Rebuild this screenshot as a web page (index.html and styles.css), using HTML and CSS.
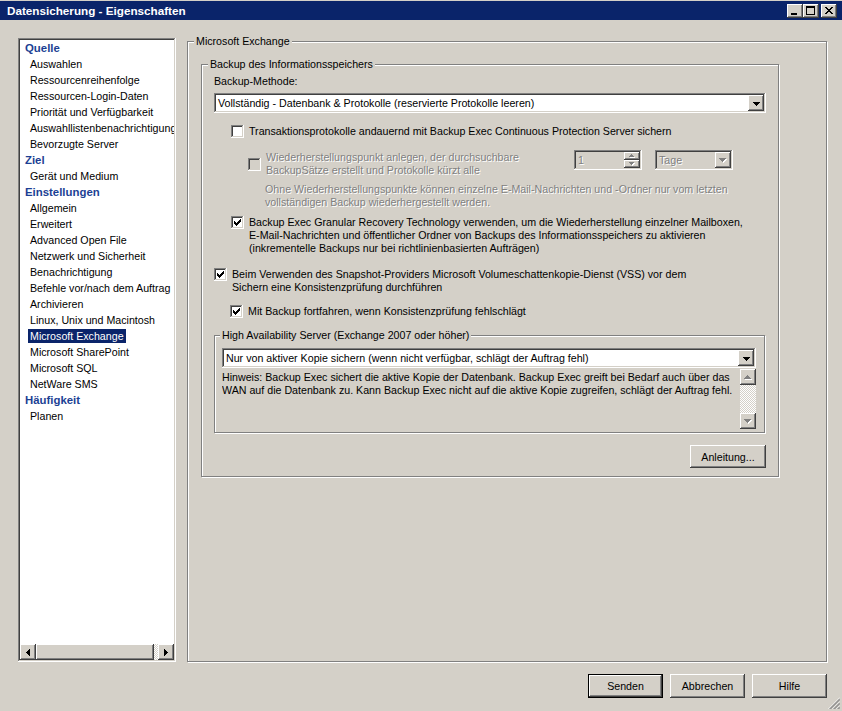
FILE: index.html
```html
<!DOCTYPE html>
<html lang="de">
<head>
<meta charset="utf-8">
<title>Datensicherung - Eigenschaften</title>
<link rel="stylesheet" href="styles.css">
</head>
<body>
<div class="window">
  <div class="titlebar">
    <span class="title">Datensicherung - Eigenschaften</span>
    <div class="caption-btns">
      <span class="cbtn"><svg class="g-min" width="6" height="2" viewBox="0 0 6 2"><path d="M0 0h6v2H0z"/></svg></span>
      <span class="cbtn"><svg class="g-max" width="9" height="9" viewBox="0 0 9 9"><path fill-rule="evenodd" d="M0 0h9v9H0zM1 2v6h7V2z"/></svg></span>
      <span class="cbtn cbtn-close"><svg class="g-close" width="8" height="7" viewBox="0 0 8 7"><path d="M0 0h2v1H0zM6 0h2v1H6zM1 1h2v1H1zM5 1h2v1H5zM2 2h4v1H2zM3 3h2v1H3zM2 4h4v1H2zM1 5h2v1H1zM5 5h2v1H5zM0 6h2v1H0zM6 6h2v1H6z"/></svg></span>
    </div>
  </div>

  <div class="main">
    <div class="navbox">
      <div class="navlist">
        <div class="nav-head">Quelle</div>
        <div class="nav-item"><span>Auswahlen</span></div>
        <div class="nav-item"><span>Ressourcenreihenfolge</span></div>
        <div class="nav-item"><span>Ressourcen-Login-Daten</span></div>
        <div class="nav-item"><span>Priorität und Verfügbarkeit</span></div>
        <div class="nav-item"><span>Auswahllistenbenachrichtigung</span></div>
        <div class="nav-item"><span>Bevorzugte Server</span></div>
        <div class="nav-head">Ziel</div>
        <div class="nav-item"><span>Gerät und Medium</span></div>
        <div class="nav-head">Einstellungen</div>
        <div class="nav-item"><span>Allgemein</span></div>
        <div class="nav-item"><span>Erweitert</span></div>
        <div class="nav-item"><span>Advanced Open File</span></div>
        <div class="nav-item"><span>Netzwerk und Sicherheit</span></div>
        <div class="nav-item"><span>Benachrichtigung</span></div>
        <div class="nav-item"><span>Befehle vor/nach dem Auftrag</span></div>
        <div class="nav-item"><span>Archivieren</span></div>
        <div class="nav-item"><span>Linux, Unix und Macintosh</span></div>
        <div class="nav-item"><span class="sel">Microsoft Exchange</span></div>
        <div class="nav-item"><span>Microsoft SharePoint</span></div>
        <div class="nav-item"><span>Microsoft SQL</span></div>
        <div class="nav-item"><span>NetWare SMS</span></div>
        <div class="nav-head">Häufigkeit</div>
        <div class="nav-item"><span>Planen</span></div>
      </div>
      <div class="hscroll">
        <span class="sbtn"><svg width="4" height="7" viewBox="0 0 4 7"><path d="M3 0h1v7H3V6H2V5H1V4H0V3h1V2h1V1h1z"/></svg></span>
        <span class="hthumb"></span>
        <span class="track"></span>
        <span class="sbtn"><svg width="4" height="7" viewBox="0 0 4 7"><path d="M0 0h1v1h1v1h1v1h1v1H3v1H2v1H1v1H0z"/></svg></span>
      </div>
    </div>

    <fieldset class="group outer">
      <legend>Microsoft Exchange</legend>
      <fieldset class="group inner">
        <legend>Backup des Informationsspeichers</legend>
        <div class="label">Backup-Methode:</div>
        <div class="combo combo-main">
          <span class="combo-text">Vollständig - Datenbank &amp; Protokolle (reservierte Protokolle leeren)</span>
          <span class="dropbtn"><svg width="7" height="4" viewBox="0 0 7 4"><path d="M0 0h7v1H6v1H5v1H4v1H3V3H2V2H1V1H0z"/></svg></span>
        </div>

        <div class="check check-cont">
          <span class="cb"></span>
          <span class="cb-label">Transaktionsprotokolle andauernd mit Backup Exec Continuous Protection Server sichern</span>
        </div>

        <div class="rp-row">
          <div class="check check-rp disabled">
            <span class="cb cb-dis"></span>
            <span class="cb-label">Wiederherstellungspunkt anlegen, der durchsuchbare<br>BackupSätze erstellt und Protokolle kürzt alle</span>
          </div>
          <div class="spinner">
            <span class="spin-text">1</span>
            <span class="spin-btns">
              <span class="spin-btn"><svg width="6" height="4" viewBox="0 0 6 4"><path class="hl" d="M3 1h1v1h1v1h1v1H1V3h1V2h1z"/><path class="sh" d="M2 0h1v1h1v1h1v1H0V2h1V1h1z"/></svg></span>
              <span class="spin-btn"><svg width="6" height="4" viewBox="0 0 6 4"><path class="hl" d="M1 1h5v1H5v1H4v1H3V3H2V2H1z"/><path class="sh" d="M0 0h5v1H4v1H3v1H2V2H1V1H0z"/></svg></span>
            </span>
          </div>
          <div class="combo combo-dis">
            <span class="combo-text">Tage</span>
            <span class="dropbtn"><svg width="8" height="5" viewBox="0 0 8 5"><path class="hl" d="M1 1h7v1H7v1H6v1H5v1H4V4H3V3H2V2H1z"/><path class="sh" d="M0 0h7v1H6v1H5v1H4v1H3V3H2V2H1V1H0z"/></svg></span>
          </div>
        </div>

        <p class="note disabled">Ohne Wiederherstellungspunkte können einzelne E-Mail-Nachrichten und -Ordner nur vom letzten<br>vollständigen Backup wiederhergestellt werden.</p>

        <div class="check check-grt">
          <span class="cb"><svg width="7" height="7" viewBox="0 0 7 7"><path d="M0 2h1v3H0zM1 3h1v3H1zM2 4h1v3H2zM3 3h1v3H3zM4 2h1v3H4zM5 1h1v3H5zM6 0h1v3H6z"/></svg></span>
          <span class="cb-label">Backup Exec Granular Recovery Technology verwenden, um die Wiederherstellung einzelner Mailboxen,<br>E-Mail-Nachrichten und öffentlicher Ordner von Backups des Informationsspeichers zu aktivieren<br>(inkrementelle Backups nur bei richtlinienbasierten Aufträgen)</span>
        </div>

        <div class="check check-vss">
          <span class="cb"><svg width="7" height="7" viewBox="0 0 7 7"><path d="M0 2h1v3H0zM1 3h1v3H1zM2 4h1v3H2zM3 3h1v3H3zM4 2h1v3H4zM5 1h1v3H5zM6 0h1v3H6z"/></svg></span>
          <span class="cb-label">Beim Verwenden des Snapshot-Providers Microsoft Volumeschattenkopie-Dienst (VSS) vor dem<br>Sichern eine Konsistenzprüfung durchführen</span>
        </div>

        <div class="check check-cont2">
          <span class="cb"><svg width="7" height="7" viewBox="0 0 7 7"><path d="M0 2h1v3H0zM1 3h1v3H1zM2 4h1v3H2zM3 3h1v3H3zM4 2h1v3H4zM5 1h1v3H5zM6 0h1v3H6z"/></svg></span>
          <span class="cb-label">Mit Backup fortfahren, wenn Konsistenzprüfung fehlschlägt</span>
        </div>

        <fieldset class="group ha">
          <legend>High Availability Server (Exchange 2007 oder höher)</legend>
          <div class="combo combo-ha">
            <span class="combo-text">Nur von aktiver Kopie sichern (wenn nicht verfügbar, schlägt der Auftrag fehl)</span>
            <span class="dropbtn"><svg width="7" height="4" viewBox="0 0 7 4"><path d="M0 0h7v1H6v1H5v1H4v1H3V3H2V2H1V1H0z"/></svg></span>
          </div>
          <div class="hint">
            <div class="hint-text">Hinweis: Backup Exec sichert die aktive Kopie der Datenbank. Backup Exec greift bei Bedarf auch über das<br>WAN auf die Datenbank zu. Kann Backup Exec nicht auf die aktive Kopie zugreifen, schlägt der Auftrag fehl.</div>
            <div class="vscroll">
              <span class="sbtn"><svg width="8" height="5" viewBox="0 0 8 5"><path class="hl" d="M4 1h1v1h1v1h1v1h1v1H1V4h1V3h1V2h1z"/><path class="sh" d="M3 0h1v1h1v1h1v1h1v1H0V3h1V2h1V1h1z"/></svg></span>
              <span class="track"></span>
              <span class="sbtn"><svg width="8" height="5" viewBox="0 0 8 5"><path class="hl" d="M1 1h7v1H7v1H6v1H5v1H4V4H3V3H2V2H1z"/><path class="sh" d="M0 0h7v1H6v1H5v1H4v1H3V3H2V2H1V1H0z"/></svg></span>
            </div>
          </div>
        </fieldset>

        <div class="btn-row">
          <button class="btn btn-help" type="button">Anleitung...</button>
        </div>
      </fieldset>
    </fieldset>
  </div>

  <div class="footer">
    <button class="btn btn-default" type="button">Senden</button>
    <button class="btn" type="button">Abbrechen</button>
    <button class="btn" type="button">Hilfe</button>
  </div>

  <svg class="grip" width="12" height="12" viewBox="0 0 12 12">
    <line x1="0.5" y1="12" x2="12" y2="0.5" stroke="#fff"/>
    <line x1="1.5" y1="12" x2="12" y2="1.5" stroke="#808080"/>
    <line x1="2.5" y1="12" x2="12" y2="2.5" stroke="#808080"/>
    <line x1="4.5" y1="12" x2="12" y2="4.5" stroke="#fff"/>
    <line x1="5.5" y1="12" x2="12" y2="5.5" stroke="#808080"/>
    <line x1="6.5" y1="12" x2="12" y2="6.5" stroke="#808080"/>
    <line x1="8.5" y1="12" x2="12" y2="8.5" stroke="#fff"/>
    <line x1="9.5" y1="12" x2="12" y2="9.5" stroke="#808080"/>
    <line x1="10.5" y1="12" x2="12" y2="10.5" stroke="#808080"/>
  </svg>
</div>
</body>
</html>
```

FILE: styles.css
```css
* { box-sizing: border-box; }

html, body {
  margin: 0;
  padding: 0;
}

body {
  width: 842px;
  height: 711px;
  overflow: hidden;
  background: #d4d0c8;
  font-family: "Liberation Sans", Arial, sans-serif;
  font-size: 10.67px;
  color: #000;
}

.window {
  position: relative;
  width: 842px;
  height: 711px;
}

/* ---------- title bar ---------- */
.titlebar {
  height: 20px;
  border-top: 1px solid #d4d0c8;
  background: #0a246a;
  display: flex;
  align-items: center;
  justify-content: space-between;
  padding: 0 5px 0 7px;
}

.title {
  color: #fff;
  font-weight: bold;
  font-size: 11.7px;
  white-space: nowrap;
}

.caption-btns {
  display: flex;
}

.cbtn {
  width: 16px;
  height: 14px;
  background: #d4d0c8;
  box-shadow: inset -1px -1px #404040, inset 1px 1px #fff, inset -2px -2px #808080;
  display: flex;
  justify-content: center;
  align-items: center;
}

.cbtn-close { margin-left: 2px; }
.cbtn svg { display: block; fill: #000; }
.g-min { margin: 6px 2px 0 0; }
.g-max { margin: 0 1px 1px 0; }
.g-close { margin: 0 1px 1px 0; }

/* ---------- 3D helpers ---------- */
.sbtn,
.dropbtn,
.hthumb,
.spin-btn,
.btn {
  background: #d4d0c8;
  box-shadow: inset -1px -1px #404040, inset 1px 1px #fff, inset -2px -2px #808080, inset 2px 2px #d4d0c8;
}

.navbox,
.combo,
.cb,
.spinner {
  box-shadow: inset -1px -1px #fff, inset 1px 1px #808080, inset -2px -2px #d4d0c8, inset 2px 2px #404040;
}

.track {
  flex: 1;
  background-color: #fff;
  background-image: conic-gradient(#d4d0c8 25%, #fff 0 50%, #d4d0c8 0 75%, #fff 0);
  background-size: 2px 2px;
}

/* ---------- main ---------- */
.main {
  display: flex;
  align-items: flex-start;
  gap: 11px;
  padding: 14px 0 0 18px;
}

/* left navigation list */
.navbox {
  width: 158px;
  height: 624px;
  margin-top: 4px;
  padding: 2px;
  background: #fff;
  display: flex;
  flex-direction: column;
}

.navlist {
  flex: 1;
  overflow: hidden;
  white-space: nowrap;
}

.nav-head {
  height: 16px;
  line-height: 16px;
  padding-left: 5px;
  font-weight: bold;
  font-size: 11.4px;
  color: #1c3f94;
}

.nav-item {
  height: 16px;
  display: flex;
  align-items: center;
  padding-left: 8px;
}

.nav-item span {
  height: 14px;
  line-height: 14px;
  padding: 0 2px;
}

.nav-item .sel {
  background: #0a246a;
  color: #fff;
}

.hscroll {
  height: 16px;
  display: flex;
  flex: none;
}

.sbtn {
  width: 16px;
  height: 16px;
  flex: none;
  display: flex;
  align-items: center;
  justify-content: center;
}

.sbtn svg { display: block; fill: #000; }

.hthumb {
  width: 118px;
  height: 16px;
}

/* group boxes */
.group {
  margin: 0;
  padding: 0;
  min-width: 0;
  border: 1px solid #808080;
  box-shadow: inset 1px 1px #fff, 1px 1px 0 #fff;
}

.group > legend {
  line-height: 14px;
  padding: 0 2px;
  background: #d4d0c8;
  white-space: nowrap;
}

.outer {
  width: 640px;
  height: 628px;
  padding: 0 0 0 13px;
}

.outer > legend { margin-left: -7px; }

.inner {
  width: 578px;
  margin-top: 9px;
  padding: 0 12px 8px 12px;
}

.inner > legend { margin-left: -6px; }

.label {
  margin-top: 4px;
  line-height: 13px;
}

/* combo boxes */
.combo {
  display: flex;
  height: 20px;
  padding: 2px;
  background: #fff;
}

.combo-text {
  flex: 1;
  padding-left: 2px;
  line-height: 16px;
  white-space: nowrap;
  overflow: hidden;
}

.dropbtn {
  width: 16px;
  height: 16px;
  flex: none;
  display: flex;
  align-items: center;
  justify-content: center;
}

.dropbtn svg { display: block; fill: #000; margin: 1px 0 0 0; }

.combo-main { margin-top: 5px; }

.combo-dis {
  background: #d4d0c8;
  color: #808080;
}

.combo-dis .combo-text { text-shadow: 1px 1px #fff; }

.hl { fill: #fff; }
.sh { fill: #808080; }

/* checkboxes */
.check {
  display: flex;
  align-items: flex-start;
  gap: 5px;
  line-height: 13px;
  white-space: nowrap;
}

.cb {
  width: 13px;
  height: 13px;
  flex: none;
  background: #fff;
  padding: 3px 0 0 3px;
}

.cb svg { display: block; fill: #000; }

.cb-dis { background: #d4d0c8; }

.disabled {
  color: #808080;
  text-shadow: 1px 1px #fff;
}

.check-cont { margin-top: 12px; padding-left: 17px; }

.rp-row {
  margin-top: 12px;
  display: grid;
  grid-template-columns: 347px 68px 78px;
  column-gap: 13px;
  align-items: start;
}

.check-rp {
  padding: 1px 0 0 34px;
  align-items: center;
}

.spinner {
  height: 20px;
  padding: 2px;
  background: #d4d0c8;
  display: flex;
}

.spin-text {
  flex: 1;
  padding-left: 2px;
  line-height: 16px;
  color: #808080;
  text-shadow: 1px 1px #fff;
}

.spin-btns {
  width: 16px;
  display: flex;
  flex-direction: column;
}

.spin-btn {
  height: 8px;
  display: flex;
  align-items: center;
  justify-content: center;
}

.spin-btn svg { display: block; }

.note {
  margin: 6px 0 0 0;
  padding-left: 51px;
  line-height: 13px;
  white-space: nowrap;
}

.check-grt { margin-top: 7px; padding-left: 17px; }
.check-vss { margin-top: 13px; }
.check-cont2 { margin-top: 11px; padding-left: 16px; }

/* high availability group */
.ha {
  width: 551px;
  margin-top: 10px;
  padding: 0 8px 3px 7px;
}

.ha > legend { margin-left: -2px; }

.combo-ha { margin-top: 6px; }

.hint {
  margin-top: 1px;
  height: 60px;
  display: flex;
}

.hint-text {
  flex: 1;
  padding-top: 2px;
  line-height: 13px;
  white-space: nowrap;
  overflow: hidden;
}

.vscroll {
  width: 16px;
  display: flex;
  flex-direction: column;
}

.vscroll .sbtn svg { margin-top: 1px; }

/* buttons */
.btn {
  font: inherit;
  color: #000;
  border: none;
  padding: 0;
  width: 75px;
  height: 24px;
}

.btn-row {
  margin-top: 12px;
  display: flex;
  justify-content: flex-end;
}

.btn-help {
  width: 76px;
  height: 23px;
}

.btn-default {
  box-shadow: inset 0 0 0 1px #000, inset -2px -2px #404040, inset 2px 2px #fff, inset -3px -3px #808080;
}

.footer {
  display: flex;
  justify-content: flex-end;
  gap: 7px;
  padding: 12px 15px 0 0;
}

.grip {
  position: absolute;
  right: 2px;
  bottom: 2px;
  display: block;
}
```
